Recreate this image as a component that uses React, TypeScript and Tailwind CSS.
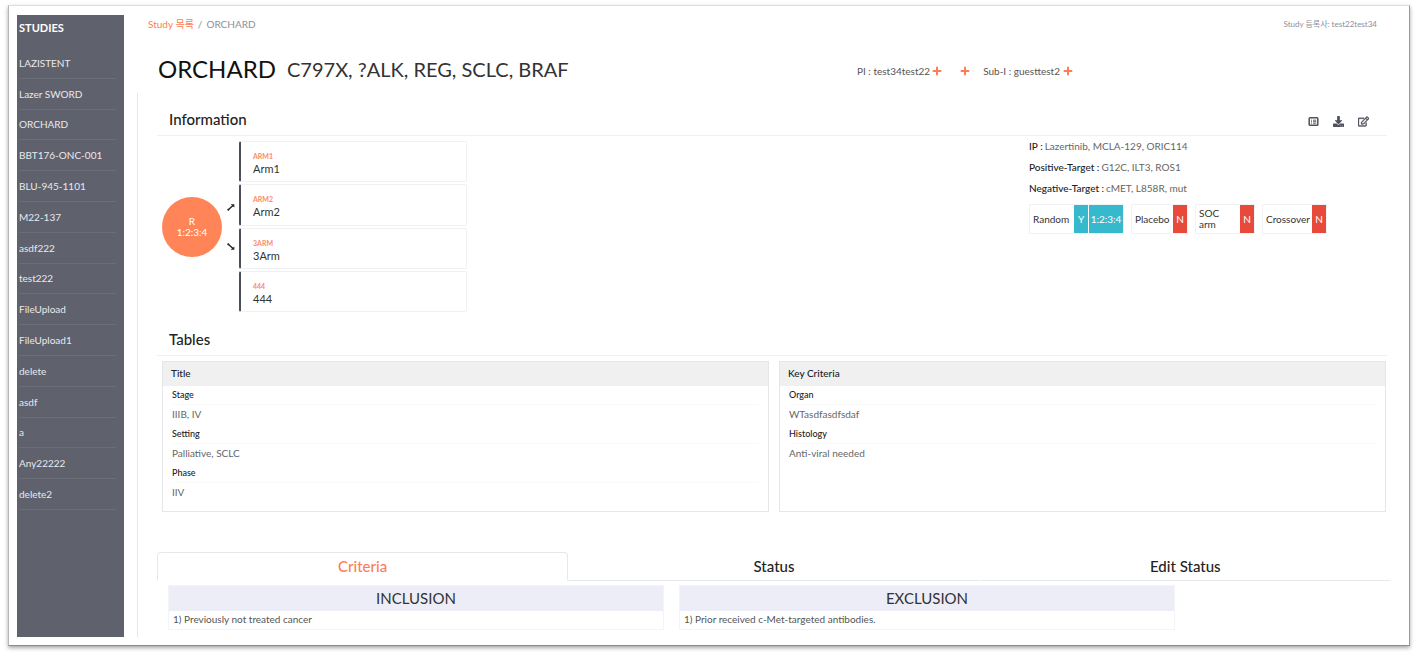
import React from 'react';
import { Plus } from 'lucide-react';
import { FaDownload, FaRegEdit } from 'react-icons/fa';

const studies = [
  'LAZISTENT',
  'Lazer SWORD',
  'ORCHARD',
  'BBT176-ONC-001',
  'BLU-945-1101',
  'M22-137',
  'asdf222',
  'test222',
  'FileUpload',
  'FileUpload1',
  'delete',
  'asdf',
  'a',
  'Any22222',
  'delete2',
];

const arms = [
  { code: 'ARM1', name: 'Arm1' },
  { code: 'ARM2', name: 'Arm2' },
  { code: '3ARM', name: '3Arm' },
  { code: '444', name: '444' },
];

const targets = [
  { label: 'IP', value: 'Lazertinib, MCLA-129, ORIC114' },
  { label: 'Positive-Target', value: 'G12C, ILT3, ROS1' },
  { label: 'Negative-Target', value: 'cMET, L858R, mut' },
];

const panels = [
  {
    title: 'Title',
    rows: [
      { label: 'Stage', value: 'IIIB, IV' },
      { label: 'Setting', value: 'Palliative, SCLC' },
      { label: 'Phase', value: 'IIV' },
    ],
  },
  {
    title: 'Key Criteria',
    rows: [
      { label: 'Organ', value: 'WTasdfasdfsdaf' },
      { label: 'Histology', value: 'Anti-viral needed' },
    ],
  },
];

const tabs = ['Criteria', 'Status', 'Edit Status'];

const criteria = [
  { title: 'INCLUSION', text: '1) Previously not treated cancer' },
  { title: 'EXCLUSION', text: '1) Prior received c-Met-targeted antibodies.' },
];

const Sidebar: React.FC = () => (
  <aside className="w-[107px] shrink-0 bg-[#5f616d] pl-[2px] pr-2 text-[#e9e9ee]">
    <h2 className="h-[33px] pt-[5px] text-[11px] leading-4 font-bold text-white">STUDIES</h2>
    <ul className="flex h-[462px] flex-col">
      {studies.map((study) => (
        <li key={study} className="flex flex-1 items-center border-b border-[#6b6d79]">
          <a href="#" className="text-[10px] leading-4">{study}</a>
        </li>
      ))}
    </ul>
  </aside>
);

const AddButton: React.FC<{ label: string }> = ({ label }) => (
  <button type="button" aria-label={label} className="text-[#fb7d56]">
    <Plus className="h-3 w-3" strokeWidth={4} />
  </button>
);

const ListIcon: React.FC = () => (
  <svg viewBox="0 0 11 11" className="h-[11px] w-[11px]" fill="none" stroke="currentColor">
    <rect x="1.2" y="1.7" width="8.6" height="7.6" rx="0.8" strokeWidth="1.5" />
    <path d="M3 4.2H4M5 4.2H8.2M3 5.7H4M5 5.7H8.2M3 7.2H4M5 7.2H8.2" strokeWidth="0.9" />
  </svg>
);

const SectionHeading: React.FC<{ title: string; children?: React.ReactNode }> = ({ title, children }) => (
  <div className="mr-1 flex h-8 items-center justify-between border-b border-[#f0f1f4] pr-[18px] pb-px pl-3">
    <h2 className="text-[15px] leading-5 font-medium text-[#222]">{title}</h2>
    {children}
  </div>
);

const Flag: React.FC<{ label: string; value: string; ratio?: string; labelClass?: string }> = ({
  label,
  value,
  ratio,
  labelClass = '',
}) => (
  <div className="flex h-[30px] border border-[#f1f2f5] text-[10px] leading-[11px] text-[#333]">
    <span className={`flex items-center px-[3px] ${labelClass}`}>{label}</span>
    <span className={`flex w-[14px] items-center justify-center text-white ${value === 'Y' ? 'bg-[#36b9cc]' : 'bg-[#e74a3b]'}`}>
      {value}
    </span>
    {ratio && (
      <span className="ml-px flex w-[34px] items-center justify-center bg-[#36b9cc] text-white">{ratio}</span>
    )}
  </div>
);

const Randomization: React.FC = () => (
  <div className="flex items-center pl-[5px]">
    <div className="flex h-[60px] w-[60px] flex-col items-center justify-center rounded-full bg-[#ff8458] text-[10px] leading-[11px] text-white">
      <span>R</span>
      <span>1:2:3:4</span>
    </div>
    <div className="flex w-[17px] flex-col items-center gap-8">
      <svg viewBox="0 0 8 8" className="h-2 w-2" fill="none" stroke="#222" strokeWidth="1.4">
        <path d="M1 7 L6 2.5" />
        <path d="M3.6 1.2 H7.3 V4.4 Z" fill="#222" stroke="none" />
        <circle cx="1.3" cy="6.7" r="1" fill="#222" stroke="none" />
      </svg>
      <svg viewBox="0 0 8 8" className="h-2 w-2" fill="none" stroke="#222" strokeWidth="1.4">
        <path d="M1 1 L6 5.5" />
        <path d="M3.6 6.8 H7.3 V3.6 Z" fill="#222" stroke="none" />
        <circle cx="1.3" cy="1.3" r="1" fill="#222" stroke="none" />
      </svg>
    </div>
    <ul className="flex h-[171px] w-[228px] flex-col gap-[2px]">
      {arms.map((arm) => (
        <li
          key={arm.code}
          className="flex flex-1 flex-col justify-center rounded-[2px] border border-l-2 border-[#eff1f5] border-l-[#4c4e5a] pt-[3px] pl-3"
        >
          <span className="text-[7px] leading-[11px] font-bold text-[#fb8a68]">{arm.code}</span>
          <span className="text-[11px] leading-[13px] text-[#333]">{arm.name}</span>
        </li>
      ))}
    </ul>
  </div>
);

const App: React.FC = () => {
  const [activeTab, setActiveTab] = React.useState('Criteria');

  return (
    <div className="bg-white px-2 pt-[5px] pb-[10px] font-['Lato','Noto_Sans_CJK_KR',sans-serif]">
      <div className="flex border border-t-[#dedede] border-r-[#999] border-b-[#8a8a8a] border-l-[#b5b5b5] pt-[9px] pr-[18px] pb-2 pl-2 shadow-[0_2px_4px_rgba(0,0,0,0.35)]">
        <Sidebar />

        <div className="flex min-w-0 flex-1 flex-col pl-[13px]">
          <div className="h-[78px] pl-[11px]">
            <div className="flex h-[18px] items-center justify-between pr-[14px] text-[#8d8f99]">
              <nav aria-label="Breadcrumb" className="flex gap-1 text-[10px] leading-4">
                <a href="#" className="text-[#fb7d56]">Study 목록</a>
                <span>/</span>
                <span>ORCHARD</span>
              </nav>
              <span className="text-[8px] leading-4">Study 등록사: test22test34</span>
            </div>
            <div className="mt-5 flex h-8 items-center pl-[10px]">
              <div className="flex w-[699px] shrink-0 items-center gap-[11px]">
                <h1 className="text-[24px] leading-8 text-[#111]">ORCHARD</h1>
                <span className="text-[20px] leading-8 text-[#333]">C797X, ?ALK, REG, SCLC, BRAF</span>
              </div>
              <div className="flex items-center pt-[3px] text-[10px] leading-4 text-[#555]">
                <span className="mr-px">PI : test34test22</span>
                <AddButton label="Add PI" />
                <span className="mr-3 ml-4 flex">
                  <AddButton label="Add investigator" />
                </span>
                <span className="mr-[2px]">Sub-I : guesttest2</span>
                <AddButton label="Add Sub-I" />
              </div>
            </div>
          </div>

          <main className="flex-1 border-l border-[#e6e7ea] pt-[11px] pb-[7px] pl-[19px]">
            <section>
              <SectionHeading title="Information">
                <div className="flex gap-[14px] pt-[5px] text-[#4f515c]">
                  <button type="button" aria-label="List"><ListIcon /></button>
                  <button type="button" aria-label="Download"><FaDownload className="h-[11px] w-[11px]" /></button>
                  <button type="button" aria-label="Edit"><FaRegEdit className="h-[11px] w-[11px]" stroke="currentColor" strokeWidth={20} /></button>
                </div>
              </SectionHeading>
              <div className="flex justify-between pt-[5px]">
                <Randomization />
                <div className="w-[362px]">
                  <dl className="-mt-[5px] text-[10px] leading-[21px] text-[#666]">
                    {targets.map((target) => (
                      <div key={target.label} className="flex gap-[2px]">
                        <dt className="font-medium text-[#222]">{target.label} :</dt>
                        <dd>{target.value}</dd>
                      </div>
                    ))}
                  </dl>
                  <div className="mt-[5px] flex gap-[7px]">
                    <Flag label="Random" value="Y" ratio="1:2:3:4" labelClass="w-[44px]" />
                    <Flag label="Placebo" value="N" labelClass="w-[41px]" />
                    <Flag label="SOC arm" value="N" labelClass="w-[44px] pr-4" />
                    <Flag label="Crossover" value="N" labelClass="w-[49px]" />
                  </div>
                </div>
              </div>
            </section>

            <section className="mt-3">
              <SectionHeading title="Tables" />
              <div className="grid grid-cols-2 gap-[10px] px-[5px] pt-[5px]">
                {panels.map((panel) => (
                  <div key={panel.title} className="h-[151px] border border-[#e5e6e8]">
                    <h3 className="bg-[#f0f0f0] px-2 pb-[2px] text-[10px] leading-[22px] font-medium text-[#222]">{panel.title}</h3>
                    <dl className="px-[9px]">
                      {panel.rows.map((row) => (
                        <div key={row.label}>
                          <dt className="border-b border-[#fafafa] text-[9px] leading-[18px] font-medium text-[#222]">{row.label}</dt>
                          <dd className="pb-[2px] text-[10px] leading-[18px] text-[#666]">{row.value}</dd>
                        </div>
                      ))}
                    </dl>
                  </div>
                ))}
              </div>
            </section>

            <section className="mt-10">
              <div role="tablist" className="grid grid-cols-3">
                {tabs.map((tab) => (
                  <button
                    key={tab}
                    type="button"
                    role="tab"
                    aria-selected={activeTab === tab}
                    onClick={() => setActiveTab(tab)}
                    className={`h-[29px] border pb-px text-[15px] leading-5 font-medium ${
                      activeTab === tab
                        ? 'rounded-t border-[#e6e8ee] border-b-white text-[#fb7d56]'
                        : 'border-transparent border-b-[#e6e8ee] text-[#222]'
                    }`}
                  >
                    {tab}
                  </button>
                ))}
              </div>
              <div className="grid w-[1018px] max-w-full grid-cols-2 gap-[15px] pt-1 pl-[11px]">
                {criteria.map((item) => (
                  <div key={item.title} className="border border-[#f3f4f7]">
                    <h3 className="bg-[#ecedf6] pb-px text-center text-[15px] leading-6 text-[#333]">{item.title}</h3>
                    <p className="px-1 pb-[2px] text-[10px] leading-4 text-[#555]">{item.text}</p>
                  </div>
                ))}
              </div>
            </section>
          </main>
        </div>
      </div>
    </div>
  );
};

export default App;
